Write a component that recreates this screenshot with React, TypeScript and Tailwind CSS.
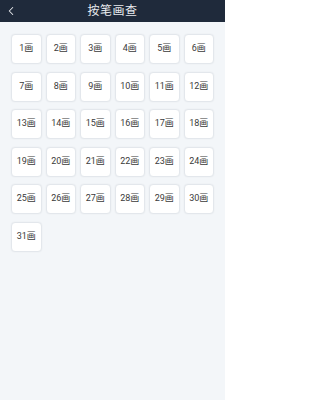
import { ChevronLeft } from "lucide-react";

const strokes = Array.from({ length: 31 }, (_, i) => i + 1);

export default function App() {
  return (
    <div className="min-h-[400px] w-[225px] bg-[#f3f6f9] font-['Roboto','Noto_Sans_CJK_SC',sans-serif]">
      {/* top bar */}
      <div className="relative flex h-[22px] items-center justify-center bg-[#1f2a3b]">
        <ChevronLeft className="absolute left-[4px] h-[14px] w-[14px] text-[#e8eaee]" strokeWidth={1.75} />
        <span className="text-[12px] font-normal leading-none text-[#e8eaee] tracking-[0.5px]">按笔画查</span>
      </div>

      <div className="grid grid-cols-6 gap-x-[4px] gap-y-[7.5px] px-[11px] pt-[12px]">
        {strokes.map((n) => (
          <div
            key={n}
            className="flex h-[30px] items-center justify-center rounded-[4px] border border-[#e3e7ec] bg-white text-[9px] text-[#3a3a3a] shadow-[0_0_2px_rgba(0,0,0,0.06)]"
          >
            {n}画
          </div>
        ))}
      </div>
    </div>
  );
}
